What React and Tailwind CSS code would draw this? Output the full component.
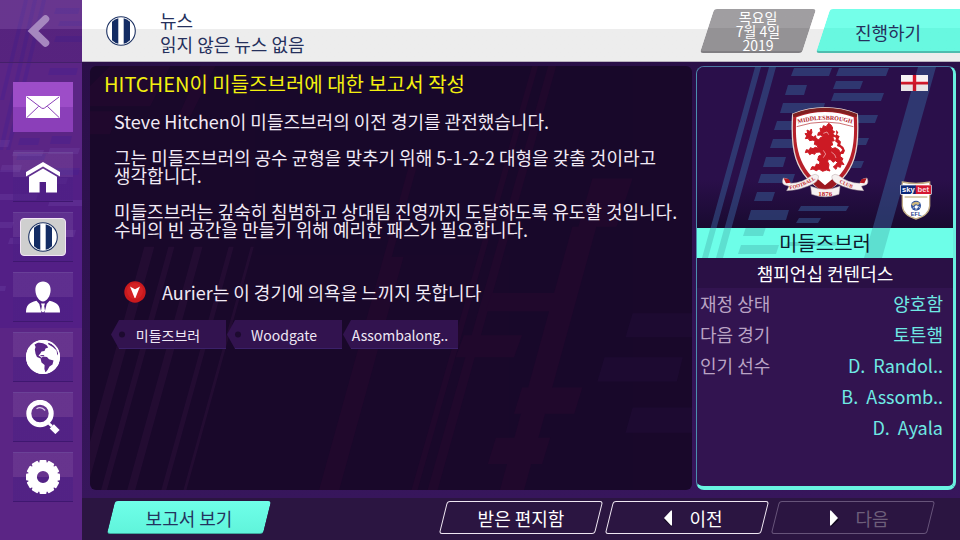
import React from "react";

const font = "font-['Noto_Sans_CJK_KR','Noto_Sans',sans-serif]";

function ClubBadge({ className }) {
  return (
    <svg viewBox="0 0 30 30" className={className} aria-hidden="true">
      <circle cx="15" cy="15" r="14.3" fill="#fff" stroke="#1d3263" strokeWidth="1.1" />
      <path d="M6 5.8 Q9 2.9 12.3 2.3 V27.7 Q9 27.1 6 24.2Z" fill="#132c64" />
      <path d="M24 5.8 Q21 2.9 17.7 2.3 V27.7 Q21 27.1 24 24.2Z" fill="#132c64" />
    </svg>
  );
}

function BackIcon() {
  return (
    <svg viewBox="0 0 24 34" className="h-[34px] w-6" aria-hidden="true">
      <path d="M18.5 5 L6 17 L18.5 29" fill="none" stroke="#a687bf" strokeWidth="7.500" strokeLinecap="round" strokeLinejoin="miter" />
    </svg>
  );
}

function MailIcon() {
  return (
    <svg viewBox="0 0 34 34" className="size-[34px]" aria-hidden="true">
      <rect x="0" y="6" width="34" height="22" rx="1" fill="#fff" />
      <path d="M1 7 L15.5 18 Q17 19 18.5 18 L33 7 M1 27.4 L12.6 16.4 M33 27.4 L21.4 16.4" fill="none" stroke="#8b3fb8" strokeWidth="1" />
    </svg>
  );
}

function HomeIcon() {
  return (
    <svg viewBox="0 0 34 34" className="size-[34px]" fill="#fff" aria-hidden="true">
      <path d="M17 2 L34 12 V16.5 L17 6.6 L0 16.5 V12Z" />
      <path d="M3 16.7 L17 8.6 L31 16.7 V32.5 H20 V22 H13.6 V32.5 H3Z" />
    </svg>
  );
}

function ManagerIcon() {
  return (
    <svg viewBox="0 0 34 34" className="size-[34px]" fill="#fff" aria-hidden="true">
      <path d="M17 1.500 C22 1.500 24.800 5 24.600 10.500 C24.400 16 20.800 21.500 17 21.500 C13.200 21.500 9.600 16 9.400 10.500 C9.200 5 12 1.500 17 1.500Z" />
      <path d="M10.500 20.800 L13.300 24 L15.400 32.500 H0 C0 25.500 2.500 23 10.500 20.800Z" />
      <path d="M23.500 20.800 L20.700 24 L18.600 32.500 H34 C34 25.500 31.500 23 23.500 20.800Z" />
      <path d="M15 23.500 H19 L18.200 26 L19 31 L17 32.500 L15 31 L15.800 26Z" />
    </svg>
  );
}

function GlobeIcon() {
  return (
    <svg viewBox="0 0 34 34" className="size-[34px]" aria-hidden="true">
      <circle cx="17" cy="17" r="17" fill="#fff" />
      <g fill="#5b2688">
        <path d="M8.500 4.500 L12 2.600 L17 3.200 L20.500 5 L22.200 7.500 L19.500 8.500 L18.500 11 L15.500 11.500 L14 14 L12.500 15.500 L15.500 17.500 L14.500 18.600 L11 17 L9.600 14 L8.800 9.500 L9.600 7Z" />
        <path d="M14.500 18.500 L17 16.600 L21 17 L23 19.200 L27.500 20.500 L26.500 24.500 L23.500 26.500 L21.500 30 L19.500 32.500 L18.400 29 L18.600 25 L15.500 22.500Z" />
        <path d="M27.500 5 Q31 8 32.600 12.500 L31.300 15.500 L30.600 10.500 L26.800 7 L22.500 4.500 L22 2.800 Q25 3.200 27.500 5Z" />
        <path d="M14 15.300 L17.500 15 L18.500 16 L15 16.200Z" />
      </g>
      <circle cx="17" cy="17" r="16.200" fill="none" stroke="#fff" strokeWidth="1.600" />
    </svg>
  );
}

function SearchIcon() {
  return (
    <svg viewBox="0 0 34 34" className="size-[34px]" fill="none" aria-hidden="true">
      <circle cx="14" cy="13.500" r="11.200" stroke="#fff" strokeWidth="5" />
      <path d="M10.500 8.800 Q15 5.800 19.200 10.500" stroke="#d9c8e8" strokeWidth="1.300" />
      <path d="M22.800 23.600 L26 26.200" stroke="#fff" strokeWidth="2.600" />
      <path d="M25.800 26.300 L31.500 32" stroke="#fff" strokeWidth="6" />
    </svg>
  );
}

const TEETH = [0, 30, 60, 90, 120, 150, 180, 210, 240, 270, 300, 330];

function GearIcon() {
  return (
    <svg viewBox="0 0 34 34" className="size-[34px]" aria-hidden="true">
      {TEETH.map((a) => (
        <rect key={a} x="13.500" y="0" width="7" height="6" rx="1" fill="#fff" transform={`rotate(${a} 17 17)`} />
      ))}
      <circle cx="17" cy="17" r="10.600" fill="none" stroke="#fff" strokeWidth="9" />
    </svg>
  );
}

function SidebarPattern() {
  return (
    <svg viewBox="0 0 82 540" preserveAspectRatio="xMinYMin slice" className="absolute inset-0 h-full w-full" aria-hidden="true">
      <rect y="170" width="82" height="158" fill="#4d1c86" opacity=".55" />
      <g fill="#472091" opacity=".4">
        <path d="M24 0 H28 L4 100 H0Z M33 0 H37 L3 150 H0 V145Z M42 0 H46 L10 150 H6Z" />
        <path d="M56 8 H80 L78 14 H54Z M60 21 H82 V26 H58Z M56 36 H82 V42 H54Z M50 68 H78 L76 75 H48Z" />
        <path d="M20 138 H40 L38 145 H18Z M52 136 H72 L70 144 H50Z M18 154 H46 L44 160 H16Z M48 168 H80 L78 175 H46Z" />
      </g>
      <g fill="#7d55b5" opacity=".22">
        <path d="M0 140 H10 L8 147 H0Z M14 150 H44 L42 156 H12Z M50 148 H80 L78 154 H48Z M2 165 H22 L20 172 H0Z M46 178 H68 L66 184 H44Z" />
        <path d="M0 194 H38 L36 200 H0Z M50 200 H82 V206 H48Z M0 222 H14 L12 228 H0Z M10 238 H40 L38 244 H8Z M52 230 H76 L74 237 H50Z M0 286 H6 L5 291 H0Z" />
      </g>
    </svg>
  );
}

const NAV = [
  { label: "홈", icon: <HomeIcon /> },
  {
    label: "클럽",
    icon: (
      <span className="flex h-[38px] w-[46px] items-center justify-center rounded border border-[#f3e4f6] bg-[#cfcfcf]">
        <ClubBadge className="size-[30px]" />
      </span>
    ),
  },
  { label: "감독", icon: <ManagerIcon /> },
  { label: "세계", icon: <GlobeIcon /> },
  { label: "검색", icon: <SearchIcon /> },
  { label: "설정", icon: <GearIcon /> },
];

function Sidebar() {
  return (
    <nav className="relative w-[82px] shrink-0 overflow-hidden bg-[#5b2585]">
      <SidebarPattern />
      <div className="relative">
        <button type="button" aria-label="뒤로" className="flex h-[63px] w-full items-center justify-center border-b border-[#44206a] bg-linear-to-b from-white/8 from-46% to-black/5 to-46% pr-1">
          <BackIcon />
        </button>
        <div className="flex flex-col items-center gap-2.5 pt-[19px] pl-1">
          <button type="button" aria-label="뉴스" className="mb-2.5 flex h-[50px] w-[60px] items-center justify-center bg-linear-to-b from-[#9d4dc8] from-50% to-[#8b3fb9] to-50%">
            <MailIcon />
          </button>
          {NAV.map((n) => (
            <button
              key={n.label}
              type="button"
              aria-label={n.label}
              className="flex h-[50px] w-[60px] items-center justify-center border-t border-b border-t-white/15 border-b-[#3f1770] bg-linear-to-b from-white/7 from-50% to-[#4d2085]/60 to-50%"
            >
              {n.icon}
            </button>
          ))}
        </div>
      </div>
    </nav>
  );
}

function Header() {
  return (
    <header className="relative flex h-[62px] shrink-0 items-center overflow-hidden border-b border-[#b9b2bf] bg-linear-to-b from-white from-47% to-[#ededed] to-47% pl-6">
      <ClubBadge className="size-[30px]" />
      <div className="flex-1 pt-0.5 pl-6 text-lg/6 text-[#25305c]">
        <h1>뉴스</h1>
        <p>읽지 않은 뉴스 없음</p>
      </div>
      <div className="relative flex h-11 w-[116px] items-center justify-center text-center text-sm/[14px] text-white">
        <span className="absolute inset-x-[7px] inset-y-0 -skew-x-18 rounded-[3px] border-b-2 border-[#807e82] bg-linear-to-b from-[#a09ea1] from-46% to-[#949295] to-46%" />
        <p className="relative">
          목요일
          <br />
          7월 4일
          <br />
          2019
        </p>
      </div>
      <button type="button" className="relative flex h-11 w-36 items-center justify-center pt-0.5 text-lg/6 text-[#26305c]">
        <span className="absolute inset-y-0 -right-4 left-[7px] -skew-x-18 rounded-[3px] border-b-2 border-[#4fbcae] bg-linear-to-b from-[#74ffe9] from-46% to-[#68f8e0] to-46%" />
        <span className="relative">진행하기</span>
      </button>
    </header>
  );
}

function ArticlePattern() {
  return (
    <svg viewBox="0 0 602 422" preserveAspectRatio="xMinYMin slice" className="absolute inset-0 h-full w-full" aria-hidden="true">
      <g fill="#28082f" opacity=".5">
        <path d="M20 0 H80 L60 40 H0 V20Z M0 45 H28 L20 68 H0Z M110 0 H125 L100 50 H88Z" />
        <path d="M320 90 H328 L236 422 H228Z M300 190 H312 L248 422 H236Z M440 0 H446 L326 422 H320Z M456 0 H464 L346 422 H336Z" />
        <path d="M400 226 H470 L464 244 H394Z M372 268 H430 L422 290 H364Z M480 160 H504 L432 422 H408Z M500 112 H540 L524 160 H486Z" />
        <path d="M430 320 H490 L482 346 H422Z M404 370 H458 L450 396 H396Z" />
      </g>
      <g fill="#2a0f38" opacity=".6">
        <path d="M54 180 H64 L0 410 V374Z M78 180 H84 L17 422 H11Z M104 180 H112 L45 422 H37Z M138 180 H143 L76 422 H71Z M160 180 H163 L96 422 H93Z" />
      </g>
      <g fill="#2b0f47" opacity=".25">
        <path d="M540 246 H602 V270 H533Z M512 290 H590 L584 314 H505Z M540 340 H602 V365 H533Z" />
      </g>
    </svg>
  );
}

function WarningIcon() {
  return (
    <svg viewBox="0 0 22 22" className="size-[22px]" aria-hidden="true">
      <circle cx="11" cy="11" r="10.700" fill="#c9191d" />
      <circle cx="11" cy="10" r="8" fill="#e02a2c" opacity=".5" />
      <path d="M6 5.500 L11 8.200 L16 5.500 L11.400 17 H10.600Z" fill="#fff" />
    </svg>
  );
}

function Tag({ label, hole }) {
  return (
    <li>
      <a href="#tag" className="relative flex h-[29px] w-[116px] items-center justify-center pr-0.5 text-sm/5 text-[#efe8f5]">
        <svg viewBox="0 0 116 29" className="absolute inset-0 h-full w-full" aria-hidden="true">
          <path d="M0 14.500 L8 0 H115 V29 H8Z" fill="#32134f" />
          <path d="M8 28.500 H115" stroke="#3b2169" />
          {hole && <circle cx="11" cy="14.500" r="3" fill="#1d0a30" />}
        </svg>
        <span className="relative">{label}</span>
      </a>
    </li>
  );
}

function Article() {
  return (
    <article className="relative flex-1 overflow-hidden rounded-md bg-[#19082a] text-[#f1eaf5]">
      <ArticlePattern />
      <div className="relative pt-1.5 pb-4 break-keep">
        <h2 className="pl-3.5 text-xl/6 text-[#f3f00f]">HITCHEN이 미들즈브러에 대한 보고서 작성</h2>
        <div className="flex flex-col gap-[18px] pt-4 pl-6 text-lg/[18px]">
          <p>Steve Hitchen이 미들즈브러의 이전 경기를 관전했습니다.</p>
          <p>
            그는 미들즈브러의 공수 균형을 맞추기 위해 5-1-2-2 대형을 갖출 것이라고
            <br />
            생각합니다.
          </p>
          <p>
            미들즈브러는 깊숙히 침범하고 상대팀 진영까지 도달하도록 유도할 것입니다.
            <br />
            수비의 빈 공간을 만들기 위해 예리한 패스가 필요합니다.
          </p>
        </div>
        <div className="flex items-center gap-4 pt-[42px] pl-[34px] text-lg/6">
          <WarningIcon />
          <p>Aurier는 이 경기에 의욕을 느끼지 못합니다</p>
        </div>
        <ul className="flex pt-4 pl-[21px]">
          <Tag label="미들즈브러" hole />
          <Tag label="Woodgate" hole />
          <Tag label="Assombalong.." />
        </ul>
      </div>
    </article>
  );
}

const BARS = [
  [97, 1, 38, 8], [91, 18, 19, 10], [86, 36, 42, 10], [80, 54, 20, 9], [76, 72, 30, 9], [69, 90, 20, 10],
  [64, 107, 34, 9], [60, 125, 18, 9], [54, 143, 38, 10], [49, 161, 20, 9], [44, 179, 38, 9],
  [142, 1, 50, 8], [139, 14, 27, 8], [137, 26, 50, 8], [160, 48, 21, 8], [160, 71, 12, 7], [157, 94, 10, 7],
  [104, 139, 48, 5], [102, 151, 22, 5], [91, 176, 50, 4],
];

function Stripes({ viewBox, fill, className }) {
  return (
    <svg viewBox={viewBox} preserveAspectRatio="xMidYMin slice" className={className} aria-hidden="true">
      <g fill={fill}>
        <path d="M58 0 H64 L11 192 H5Z M72 0 H79 L26 192 H19Z M221 0 H239 L185 192 H167Z" />
        {BARS.map(([x, y, w, h]) => (
          <path key={`${x}-${y}`} d={`M${x} ${y} h${w} l-3 ${h} h${-w}Z`} />
        ))}
      </g>
    </svg>
  );
}

function Crest() {
  return (
    <svg viewBox="30 27 270 279" className="relative h-[93px] w-[90px]" role="img" aria-label="Middlesbrough Football Club 1876">
      <path d="M68 54 Q165 16 262 54 C268 150 262 235 165 288 C68 235 62 150 68 54Z" fill="#b5202a" stroke="#e3d6d2" strokeWidth="4" />
      <path d="M68 54 Q165 16 262 54 L260 64 Q165 28 70 64Z" fill="#7e2021" />
      <path d="M79 64 Q165 32 251 64 C256 145 249 222 165 274 C81 222 74 145 79 64Z" fill="#fff" />
      <path d="M80 92 Q165 64 250 92" fill="none" stroke="#b3282f" strokeWidth="2" />
      <path id="nameArc" d="M80 84 Q165 58 250 84" fill="none" />
      <text fill="#b0161f" fontSize="18" fontWeight="700" className="font-['Liberation_Serif',serif]" textAnchor="middle">
        <textPath href="#nameArc" startOffset="50%">MIDDLESBROUGH</textPath>
      </text>
      <g fill="#cc1a24">
        <path d="M150 96 L157 99 L160 89 L168 92 L176 82 L184 88 L188 96 L186 103 L194 107 L189 113 L196 121 L188 124 L193 134 L185 136 L188 147 L180 149 L186 158 L196 155 L206 161 L212 171 L210 181 L219 188 L215 195 L222 206 L214 204 L211 214 L202 211 L198 220 L190 213 L197 206 L203 199 L196 194 L189 199 L184 192 L175 189 L173 197 L177 206 L175 216 L180 225 L169 222 L158 226 L147 219 L139 224 L129 219 L122 221 L126 212 L136 213 L139 204 L148 206 L150 197 L143 192 L146 180 L155 176 L150 168 L138 169 L134 175 L126 172 L119 176 L114 168 L106 170 L109 161 L118 163 L121 155 L129 158 L136 154 L145 157 L141 148 L133 145 L135 136 L129 132 L119 134 L114 127 L106 128 L110 120 L105 113 L113 112 L111 102 L119 106 L124 99 L126 110 L122 118 L130 123 L137 119 L138 127 L147 132 L151 125 L160 121 L151 117 L143 118 L145 110 L152 107Z" stroke="#cc1a24" strokeWidth="3" />
        <path d="M198 102 L205 109 L201 116 L209 121 L205 130 L213 137 L211 146 L220 153 L225 164 L220 174 L211 174 L204 169 L212 168 L217 161 L210 154 L201 150 L203 142 L195 136 L198 127 L193 121 L199 115Z" />
      </g>
      <path d="M160 112 L171 108 L176 116 M160 163 L167 174 L160 185 M184 168 L194 176 L198 186" fill="none" stroke="#f6c9cb" strokeWidth="2" />
      <path d="M128 262 L139 245 L158 262 L165 268 L172 262 L192 245 L203 262 L184 278 H146Z" fill="#9c1820" />
      <path d="M144 246 L165 262 L187 246 L176 236 H154Z" fill="#fff" />
      <g fill="#f6f1f1" stroke="#b9a9ad" strokeWidth="1.500">
        <path d="M40 246 Q34 260 42 266 L57 271 L50 284 Q92 283 132 262 Q148 250 145 239 Q136 231 126 238 Q96 262 62 262 L53 249Z" />
        <path d="M291 246 Q297 260 289 266 L274 271 L281 284 Q239 283 199 262 Q183 250 186 239 Q195 231 205 238 Q235 262 269 262 L278 249Z" />
        <path d="M122 271 Q165 289 210 271 L207 295 Q165 310 125 295Z" />
      </g>
      <path d="M41 247 L56 249 L62 260 L48 262Z M290 247 L275 249 L269 260 L283 262Z" fill="#b3161f" />
      <path id="ribbonL" d="M56 280 Q102 274 140 248" fill="none" />
      <path id="ribbonR" d="M192 250 Q230 275 268 280" fill="none" />
      <g fill="#c01d27" fontWeight="700" className="font-['Liberation_Serif',serif]" textAnchor="middle">
        <text fontSize="15"><textPath href="#ribbonL" startOffset="50%">FOOTBALL</textPath></text>
        <text fontSize="15"><textPath href="#ribbonR" startOffset="48%">CLUB</textPath></text>
        <text x="166" y="299" fontSize="21">1876</text>
      </g>
    </svg>
  );
}

function Flag() {
  return (
    <svg viewBox="0 0 27 16" className="h-4 w-[27px]" role="img" aria-label="England">
      <rect width="27" height="16" fill="#f7f2f4" />
      <path d="M11.800 0 H15.200 V16 H11.800Z M0 6.700 H27 V9.500 H0Z" fill="#d5182b" />
      <rect y="8" width="27" height="8" fill="#000" opacity=".06" />
    </svg>
  );
}

function LeagueBadge() {
  return (
    <svg viewBox="0 0 96 117" className="h-[39px] w-8" role="img" aria-label="Sky Bet EFL">
      <path d="M7 3 Q48 12 89 3 V75 Q87 103 48 114 Q9 103 7 75Z" fill="#fff" stroke="#c3ae86" strokeWidth="4" />
      <path d="M14 48 H82" stroke="#cdbb96" strokeWidth="5" />
      <rect x="1" y="11" width="94" height="30" rx="3" fill="#fff" />
      <rect x="3" y="13" width="45" height="26" fill="#0c2878" />
      <rect x="47" y="13" width="46" height="26" fill="#d41731" />
      <g fontWeight="700" textAnchor="middle" className="font-['Liberation_Sans',sans-serif]">
        <text x="25" y="33" fontSize="23" fill="#fff">sky</text>
        <text x="70" y="33" fontSize="23" fill="#fbd9de">bet</text>
        <text x="48" y="104" fontSize="17" fill="#1f3d8c">EFL</text>
      </g>
      <circle cx="48" cy="74" r="15" fill="#31539c" />
      <path d="M34 70 Q44 57 60 66 L54 73 Q46 66 40 76Z" fill="#cfb87d" />
      <circle cx="49" cy="78" r="5" fill="#fff" />
      <path d="M38 82 L44 78 M60 80 L54 76 M48 88 V83" stroke="#fff" strokeWidth="2" />
    </svg>
  );
}

const ROWS = [
  { term: "재정 상태", values: ["양호함"] },
  { term: "다음 경기", values: ["토튼햄"] },
  { term: "인기 선수", values: ["D.  Randol..", "B.  Assomb..", "D.  Ayala"] },
];

function ClubCard() {
  return (
    <aside className="flex w-[260px] shrink-0 flex-col overflow-hidden rounded-lg border-t border-r-3 border-b-4 border-l border-t-[#4b79a3] border-r-[#69efe0] border-b-[#69f5e2] border-l-[#4b8fae] bg-[#321450] text-lg/[31px]">
      <div className="relative flex h-[161px] items-center justify-center overflow-hidden bg-linear-to-b from-[#2a0f4a] from-70% to-[#190a30] pt-2">
        <Stripes viewBox="0 0 256 161" fill="#34528a99" className="absolute inset-0 h-full w-full" />
        <Crest />
        <div className="absolute top-2 right-[25px]">
          <Flag />
        </div>
        <div className="absolute right-[21px] bottom-2">
          <LeagueBadge />
        </div>
      </div>
      <h2 className="relative flex h-[30px] items-center justify-center overflow-hidden bg-[#6dfee8] text-xl/6 text-[#0d1a2e]">
        <Stripes viewBox="0 162 256 30" fill="#5ddfd0" className="absolute inset-0 h-full w-full" />
        <span className="relative">미들즈브러</span>
      </h2>
      <p className="bg-[#2a1045] text-center text-lg/[30px] text-white">챔피언십 컨텐더스</p>
      <dl>
        {ROWS.map((r) => (
          <div key={r.term} className="flex justify-between pr-2.5 pl-[3px]">
            <dt className="text-[#b9a3c4]">{r.term}</dt>
            <dd className="text-right whitespace-pre text-[#6fe9e4]">
              {r.values.map((v) => (
                <span key={v} className="block">
                  {v}
                </span>
              ))}
            </dd>
          </div>
        ))}
      </dl>
    </aside>
  );
}

function Arrow({ right }) {
  return (
    <svg viewBox="0 0 10 18" className="h-[18px] w-2.5" aria-hidden="true">
      <path d={right ? "M2 3 L10 11 L2 18Z" : "M9 3 L1 11 L9 18Z"} fill="#12071f" />
      <path d={right ? "M1 1.500 H2 L9 9 L2 16.500 H1Z" : "M9 1.500 H8 L1 9 L8 16.500 H9Z"} fill="#fff" />
    </svg>
  );
}

function OutlineButton({ children, icon, disabled }) {
  return (
    <button type="button" disabled={disabled} className="group relative flex h-[33px] w-[164px] items-center justify-center text-lg/6 text-white disabled:text-[#6d5f7a]">
      <span className="absolute inset-x-1 inset-y-0 -skew-x-14 rounded-[3px] border border-[#efe6f2] group-disabled:border-[#67547a]" />
      {icon ? (
        <span className="relative flex items-center gap-4 pl-3">
          {icon}
          {children}
        </span>
      ) : (
        <span className="relative">{children}</span>
      )}
    </button>
  );
}

function Footer() {
  return (
    <footer className="relative flex h-[42px] shrink-0 items-start justify-between bg-[#2b1541] px-[25px] pt-[3px]">
      <button type="button" className="relative flex h-[33px] w-[164px] items-center justify-center text-lg/6 text-[#24335e]">
        <span className="absolute inset-x-1 inset-y-0 -skew-x-14 rounded-[3px] border-b border-[#3fa99d] bg-linear-to-b from-[#6fffe9] to-[#60f4db]" />
        <span className="relative">보고서 보기</span>
      </button>
      <div className="flex gap-0.5">
        <OutlineButton>받은 편지함</OutlineButton>
        <OutlineButton icon={<Arrow />}>이전</OutlineButton>
        <OutlineButton icon={<Arrow right />} disabled>
          다음
        </OutlineButton>
      </div>
    </footer>
  );
}

export default function App() {
  return (
    <div className={`flex min-h-screen overflow-hidden bg-[#2b1541] ${font}`}>
      <Sidebar />
      <div className="flex min-w-0 flex-1 flex-col">
        <Header />
        <main className="flex flex-1 items-stretch gap-1 bg-linear-to-b from-[#2a0f48] to-[#37165c] pt-1 pr-1 pb-2 pl-2">
          <Article />
          <ClubCard />
        </main>
        <Footer />
      </div>
    </div>
  );
}
